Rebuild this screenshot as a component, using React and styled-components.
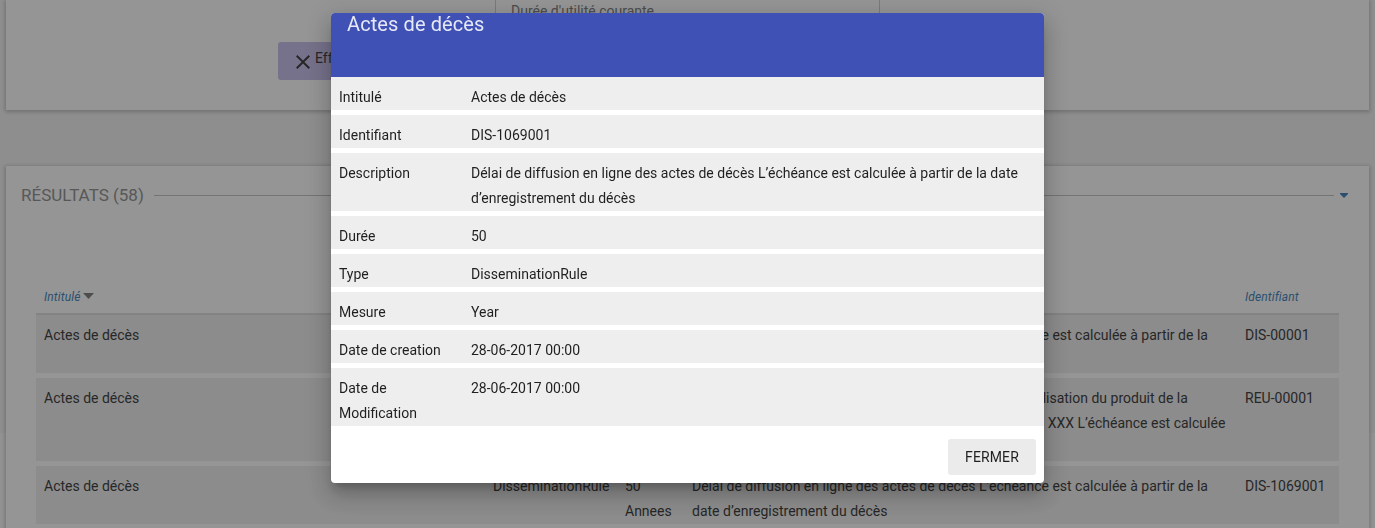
import React from "react";
import styled, { createGlobalStyle } from "styled-components";

const GlobalStyle = createGlobalStyle`
  *, *::before, *::after { box-sizing: border-box; }
  html, body { margin: 0; height: 100%; overflow: hidden; }
  body {
    color: rgba(0, 0, 0, 0.87);
    font-family: Roboto, "Liberation Sans", sans-serif;
    font-size: 14px;
    line-height: 25px;
  }
  button { font: inherit; color: inherit; border: 0; cursor: pointer; }
`;

const Page = styled.main`
  display: flex;
  flex-direction: column;
  gap: 56px;
  height: 100vh;
  padding: 0 6px;
  overflow: hidden;
  background: linear-gradient(#f2f2f2 82%, #fafafa 82%);
  color: #2c2c2c;
`;

const Card = styled.section`
  flex: none;
  background: #fff;
  box-shadow: 0 1px 4px 1px rgba(0, 0, 0, 0.24);
`;

const SearchCard = styled(Card)`
  padding-bottom: 30px;
`;

const FieldRow = styled.div`
  display: flex;
  justify-content: center;
  padding-bottom: 12px;
`;

const Field = styled.div`
  width: 385px;
  height: 30px;
  padding: 0 15px;
  border: 1px solid #ccc;
  border-top: 0;
  color: #757575;
  line-height: 22px;
`;

const Actions = styled.div`
  display: flex;
  padding-left: 272px;
`;

const ClearButton = styled.button`
  display: flex;
  align-items: flex-start;
  height: 38px;
  padding: 8px 13px;
  border-radius: 3px;
  background: #c5bcec;
  line-height: 16px;
`;

const ResultsHeader = styled.header`
  display: flex;
  align-items: center;
  padding: 17px 21px 0 15px;
`;

const ResultsTitle = styled.h2`
  margin: 0;
  color: #8a8a8a;
  font-size: 17px;
  font-weight: 400;
  line-height: 24px;
  text-transform: uppercase;
`;

const Rule = styled.span`
  flex: 1;
  height: 1px;
  margin: 0 6px 0 10px;
  background: #c0c0c0;
`;

const ToggleButton = styled.button`
  display: flex;
  padding: 0;
  background: none;
  color: #337ab7;
`;

const TableWrap = styled.div`
  padding: 80px 30px 0;
`;

const ResultsTable = styled.table`
  width: 100%;
  table-layout: fixed;
  border-collapse: separate;
  border-spacing: 0;
`;

const Column = styled.col`
  width: ${({ $width }) => $width || "auto"};
`;

const HeadCell = styled.th`
  padding: 0 8px 6px;
  border-bottom: 2px solid #ddd;
  color: #337ab7;
  font-size: 12px;
  font-style: italic;
  font-weight: 400;
  letter-spacing: 0.01em;
  line-height: 20px;
  text-align: left;
`;

const SortIcon = styled.svg`
  margin-left: 3px;
  color: #757575;
  vertical-align: 2px;
`;

const Cell = styled.td`
  height: ${({ $lines }) => $lines * 25 + 13}px;
  padding: 8px 8px 0;
  border-bottom: 5px solid #fff;
  background: #eee;
  background-clip: padding-box;
  vertical-align: top;
`;

const Backdrop = styled.div`
  position: fixed;
  inset: 0;
  display: flex;
  align-items: flex-start;
  justify-content: center;
  padding-top: 13px;
  background: rgba(33, 33, 33, 0.48);
`;

const Dialog = styled.div`
  width: 80%;
  max-width: 713px;
  overflow: hidden;
  border-radius: 4px;
  background: #fff;
  box-shadow: 0 7px 8px -4px rgba(0, 0, 0, 0.2), 0 13px 19px 2px rgba(0, 0, 0, 0.14),
    0 5px 24px 4px rgba(0, 0, 0, 0.12);
`;

const DialogHeader = styled.header`
  height: 64px;
  padding: 0 16px;
  background: #3f51b5;
  color: rgba(255, 255, 255, 0.87);
`;

const DialogTitle = styled.h2`
  margin: 0;
  font-size: 20px;
  font-weight: 400;
  letter-spacing: 0.005em;
  line-height: 22px;
`;

const Details = styled.dl`
  display: flex;
  flex-direction: column;
  gap: 5px;
  margin: 0;
`;

const DetailRow = styled.div`
  display: grid;
  grid-template-columns: 116px 1fr;
  column-gap: 16px;
  padding: 8px 8px 0;
  background: #eee;
`;

const DetailLabel = styled.dt`
  margin: 0;
`;

const DetailValue = styled.dd`
  margin: 0;
`;

const DialogActions = styled.footer`
  display: flex;
  justify-content: flex-end;
  padding: 13px 8px 8px;
`;

const CloseButton = styled.button`
  min-width: 88px;
  height: 36px;
  padding: 0 16px;
  border-radius: 3px;
  background: #ebebeb;
  letter-spacing: 0.01em;
  line-height: 36px;
  text-transform: uppercase;
`;

const details = [
  ["Intitulé", "Actes de décès"],
  ["Identifiant", "DIS-1069001"],
  [
    "Description",
    "Délai de diffusion en ligne des actes de décès L’échéance est calculée à partir de la date d’enregistrement du décès",
  ],
  ["Durée", "50"],
  ["Type", "DisseminationRule"],
  ["Mesure", "Year"],
  ["Date de creation", "28-06-2017 00:00"],
  ["Date de Modification", "28-06-2017 00:00"],
];

const deathRecords =
  "Délai de diffusion en ligne des actes de décès L’échéance est calculée à partir de la date d’enregistrement du décès";

const results = [
  { id: "DIS-00001", type: "DisseminationRule", duration: "25 Annees", text: deathRecords, lines: 2 },
  {
    id: "REU-00001",
    type: "ReuseRule",
    duration: "10 Annees",
    text: "Délai de réutilisation les actes de décès pour commercialisation du produit de la recherche généalogique, définie par la licence numérique XXX L’échéance est calculée à partir de la date de signature",
    lines: 3,
  },
  { id: "DIS-1069001", type: "DisseminationRule", duration: "50 Annees", text: deathRecords, lines: 2 },
];

const CloseIcon = () => (
  <svg width="24" height="24" viewBox="0 0 24 24" fill="currentColor" aria-hidden="true">
    <path d="M19 6.41L17.59 5 12 10.59 6.41 5 5 6.41 10.59 12 5 17.59 6.41 19 12 13.41 17.59 19 19 17.59 13.41 12z" />
  </svg>
);

export default function App() {
  return (
    <>
      <GlobalStyle />
      <Page>
        <SearchCard>
          <FieldRow>
            <Field>Durée d'utilité courante</Field>
          </FieldRow>
          <Actions>
            <ClearButton type="button">
              <CloseIcon />
              Effacer
            </ClearButton>
          </Actions>
        </SearchCard>
        <Card>
          <ResultsHeader>
            <ResultsTitle>Résultats (58)</ResultsTitle>
            <Rule />
            <ToggleButton type="button" aria-label="Replier les résultats">
              <svg width="8" height="5" viewBox="0 0 8 5" aria-hidden="true">
                <path d="M0 0h8v1L4 5 0 1z" fill="currentColor" />
              </svg>
            </ToggleButton>
          </ResultsHeader>
          <TableWrap>
            <ResultsTable>
              <colgroup>
                <Column />
                <Column $width="132px" />
                <Column $width="67px" />
                <Column $width="553px" />
                <Column $width="102px" />
              </colgroup>
              <thead>
                <tr>
                  <HeadCell>
                    Intitulé
                    <SortIcon width="11" height="6" viewBox="0 0 11 6" aria-hidden="true">
                      <path d="M0 0h11L5.500 6z" fill="currentColor" />
                    </SortIcon>
                  </HeadCell>
                  <HeadCell>Type</HeadCell>
                  <HeadCell>Durée</HeadCell>
                  <HeadCell>Description</HeadCell>
                  <HeadCell>Identifiant</HeadCell>
                </tr>
              </thead>
              <tbody>
                {results.map((r) => (
                  <tr key={r.id}>
                    <Cell $lines={r.lines}>Actes de décès</Cell>
                    <Cell $lines={r.lines}>{r.type}</Cell>
                    <Cell $lines={r.lines}>{r.duration}</Cell>
                    <Cell $lines={r.lines}>{r.text}</Cell>
                    <Cell $lines={r.lines}>{r.id}</Cell>
                  </tr>
                ))}
              </tbody>
            </ResultsTable>
          </TableWrap>
        </Card>
      </Page>
      <Backdrop>
        <Dialog role="dialog" aria-modal="true" aria-labelledby="dialog-title">
          <DialogHeader>
            <DialogTitle id="dialog-title">Actes de décès</DialogTitle>
          </DialogHeader>
          <Details>
            {details.map(([label, value]) => (
              <DetailRow key={label}>
                <DetailLabel>{label}</DetailLabel>
                <DetailValue>{value}</DetailValue>
              </DetailRow>
            ))}
          </Details>
          <DialogActions>
            <CloseButton type="button">Fermer</CloseButton>
          </DialogActions>
        </Dialog>
      </Backdrop>
    </>
  );
}
